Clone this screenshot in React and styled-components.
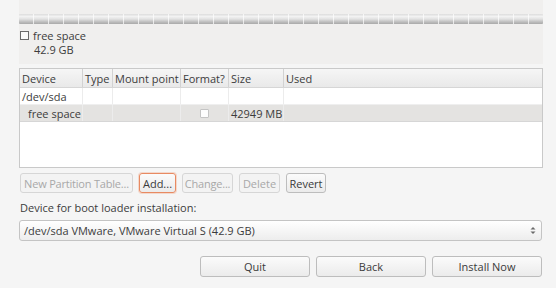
import React from "react";
import styled, { createGlobalStyle } from "styled-components";

const GlobalStyle = createGlobalStyle`
  html, body {
    margin: 0;
    padding: 0;
    background: #f5f5f5;
  }
  body {
    font-family: "Open Sans", "DejaVu Sans", sans-serif;
    font-size: 11px;
    color: #3c3c3c;
  }
`;

const Page = styled.div`
  width: 556px;
  height: 288px;
  box-sizing: border-box;
  padding: 0 13px 0 19px;
  display: flex;
  flex-direction: column;
  overflow: hidden;
`;

const DiskPanel = styled.div`
  background: #f0efee;
  height: 64px;
  padding-top: 14px;
  box-sizing: border-box;
`;

const Bar = styled.div`
  height: 10px;
  background-image:
    repeating-linear-gradient(to right, transparent 0 14px, rgba(255,255,255,0.7) 14px 15px),
    linear-gradient(to bottom, #dcdcdc 0%, #f2f2f2 25%, #e2e2e2 50%, #bdbdbd 80%, #a9a9a9 100%);
  border-radius: 1px;
`;

const Legend = styled.div`
  display: flex;
  align-items: flex-start;
  gap: 4px;
  margin-top: 5px;
  margin-left: 1px;
`;

const LegendBox = styled.span`
  width: 7px;
  height: 7px;
  border: 1px solid #6a6a6a;
  background: #fafafa;
  margin-top: 2px;
`;

const LegendText = styled.div`
  line-height: 15px;
  margin-top: -1px;
  div + div { padding-left: 1px; margin-top: -1px; }
`;

const Table = styled.div`
  margin-top: 4px;
  height: 100px;
  background: #ffffff;
  border: 1px solid #c9c9c9;
  box-sizing: border-box;
`;

const Row = styled.div`
  display: grid;
  grid-template-columns: 63px 30px 68px 48px 55px 1fr;
  height: ${({ $header }) => ($header ? "18px" : "16px")};
  background: ${({ $header, $selected }) =>
    $header
      ? "linear-gradient(to bottom, #f6f6f6, #e9e9e9)"
      : $selected
      ? "#e4e3e1"
      : "#ffffff"};
  border-bottom: 1px solid ${({ $header, $selected }) => ($header || $selected ? "#d6d6d6" : "#efefef")};
`;

const Cell = styled.div`
  display: flex;
  align-items: center;
  justify-content: ${({ $center }) => ($center ? "center" : "flex-start")};
  padding-left: ${({ $indent }) => ($indent ? "8px" : "2px")};
  border-right: 1px solid ${({ $header }) => ($header ? "#d2d2d2" : "#ececec")};
  white-space: nowrap;
  overflow: hidden;
  &:last-child { border-right: none; }
`;

const SmallCheck = styled.span`
  width: 7px;
  height: 7px;
  border: 1px solid #c4c4c4;
  background: #fdfdfd;
  border-radius: 1px;
  margin-left: -2px;
`;

const Toolbar = styled.div`
  display: flex;
  gap: 6px;
  margin-top: 5px;
  margin-left: 1px;
`;

const Button = styled.button`
  font-family: inherit;
  font-size: 11px;
  box-sizing: border-box;
  flex: none;
  white-space: nowrap;
  height: ${({ $big }) => ($big ? "21px" : "20px")};
  width: ${({ $w }) => ($w ? `${$w}px` : "auto")};
  padding: 0;
  margin: 0;
  border-radius: 3px;
  border: 1px solid ${({ $focus, $disabled }) =>
    $focus ? "#e88a62" : $disabled ? "#d6d6d6" : "#bdbdbd"};
  box-shadow: ${({ $focus }) => ($focus ? "0 0 0 1px rgba(240,150,110,0.3)" : "none")};
  background: ${({ $disabled }) =>
    $disabled
      ? "#f3f3f3"
      : "linear-gradient(to bottom, #fbfbfb, #ebebeb)"};
  color: ${({ $disabled }) => ($disabled ? "#a8a8a8" : "#3a3a3a")};
  letter-spacing: ${({ $tight }) => ($tight ? "-0.2px" : "0")};
  display: flex;
  align-items: center;
  justify-content: center;
`;

const Label = styled.div`
  margin-top: 8px;
  margin-left: 1px;
  line-height: 14px;
`;

const Combo = styled.div`
  margin-top: 5px;
  height: 21px;
  box-sizing: border-box;
  border: 1px solid #c4c4c4;
  border-radius: 3px;
  background: linear-gradient(to bottom, #ffffff, #ededed);
  display: flex;
  align-items: center;
  justify-content: space-between;
  padding: 0 5px 0 4px;
  margin-right: 1px;
`;

const Arrows = styled.svg`
  width: 6px;
  height: 9px;
`;

const Footer = styled.div`
  display: grid;
  grid-template-columns: repeat(3, 110px);
  justify-content: end;
  gap: 6px;
  margin-top: 15px;
  margin-right: 1px;
`;

export default function App() {
  const header = ["Device", "Type", "Mount point", "Format?", "Size", "Used"];
  return (
    <>
      <GlobalStyle />
      <Page>
        <DiskPanel>
          <Bar />
          <Legend>
            <LegendBox />
            <LegendText>
              <div>free space</div>
              <div>42.9 GB</div>
            </LegendText>
          </Legend>
        </DiskPanel>

        <Table>
          <Row $header>
            {header.map((h) => (
              <Cell $header key={h}>{h}</Cell>
            ))}
          </Row>
          <Row>
            <Cell>/dev/sda</Cell>
            <Cell />
            <Cell />
            <Cell />
            <Cell />
            <Cell />
          </Row>
          <Row $selected>
            <Cell $indent>free space</Cell>
            <Cell />
            <Cell />
            <Cell $center>
              <SmallCheck />
            </Cell>
            <Cell>42949 MB</Cell>
            <Cell />
          </Row>
        </Table>

        <Toolbar>
          <Button $disabled $tight $w={113}>New Partition Table...</Button>
          <Button $focus $w={37}>Add...</Button>
          <Button $disabled $tight $w={51}>Change...</Button>
          <Button $disabled $w={41}>Delete</Button>
          <Button $w={40}>Revert</Button>
        </Toolbar>

        <Label>Device for boot loader installation:</Label>
        <Combo>
          <span>/dev/sda VMware, VMware Virtual S (42.9 GB)</span>
          <Arrows viewBox="0 0 6 9">
            <path d="M0.5 3.5 L3 1 L5.5 3.5 Z" fill="#6a6a6a" />
            <path d="M0.5 5.5 L3 8 L5.5 5.5 Z" fill="#6a6a6a" />
          </Arrows>
        </Combo>

        <Footer>
          <Button $big $w={110}>Quit</Button>
          <Button $big $w={110}>Back</Button>
          <Button $big $w={110}>Install Now</Button>
        </Footer>
      </Page>
    </>
  );
}
